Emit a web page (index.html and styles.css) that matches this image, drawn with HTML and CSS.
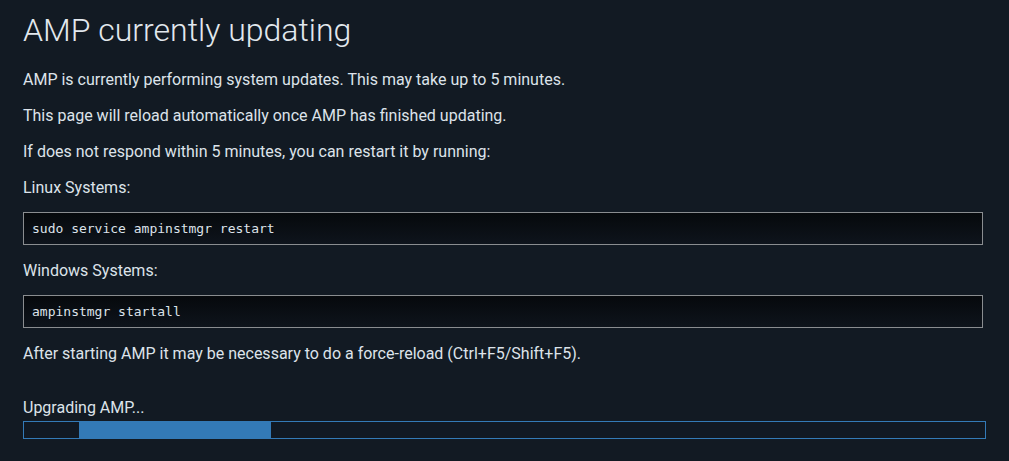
FILE: index.html
```html
<!DOCTYPE html>
<html>
<head>
<meta charset="utf-8">
<link rel="stylesheet" href="styles.css">
</head>
<body>
<main class="page">
  <h1 class="title">AMP currently updating</h1>
  <p class="text">AMP is currently performing system updates. This may take up to 5 minutes.</p>
  <p class="text">This page will reload automatically once AMP has finished updating.</p>
  <p class="text">If does not respond within 5 minutes, you can restart it by running:</p>
  <p class="text">Linux Systems:</p>
  <pre class="code">sudo service ampinstmgr restart</pre>
  <p class="text">Windows Systems:</p>
  <pre class="code">ampinstmgr startall</pre>
  <p class="text">After starting AMP it may be necessary to do a force-reload (Ctrl+F5/Shift+F5).</p>
  <p class="text status">Upgrading AMP...</p>
  <div class="progress"><div class="progress-bar"></div></div>
</main>
</body>
</html>
```
FILE: styles.css
```css
html, body {
  margin: 0;
  padding: 0;
  background: #121a23;
}
body {
  font-family: Roboto, "Liberation Sans", sans-serif;
  color: #dde3ea;
  font-size: 16px;
}
.page {
  padding: 10px 26px 0 23px;
}
.title {
  font-weight: 300;
  font-size: 32px;
  line-height: 40px;
  margin: 0 0 18px;
  color: #e2e8ee;
}
.text {
  margin: 0 0 12px;
  line-height: 24px;
}
.code {
  margin: 0 0 14px;
  box-sizing: border-box;
  height: 33px;
  padding: 0 8px;
  display: flex;
  align-items: center;
  border: 1px solid #8a8d90;
  background: linear-gradient(#06090c, #0e141c);
  font-family: "DejaVu Sans Mono", monospace;
  font-size: 13px;
  color: #dde3ea;
}
.status {
  margin-top: 30px;
  margin-bottom: 1px;
}
.progress {
  box-sizing: border-box;
  height: 18px;
  border: 1px solid #337ab7;
  background: #111923;
  display: flex;
  margin-right: -3px;
}
.progress-bar {
  margin-left: 55px;
  width: 192px;
  background: #337ab7;
}
```
